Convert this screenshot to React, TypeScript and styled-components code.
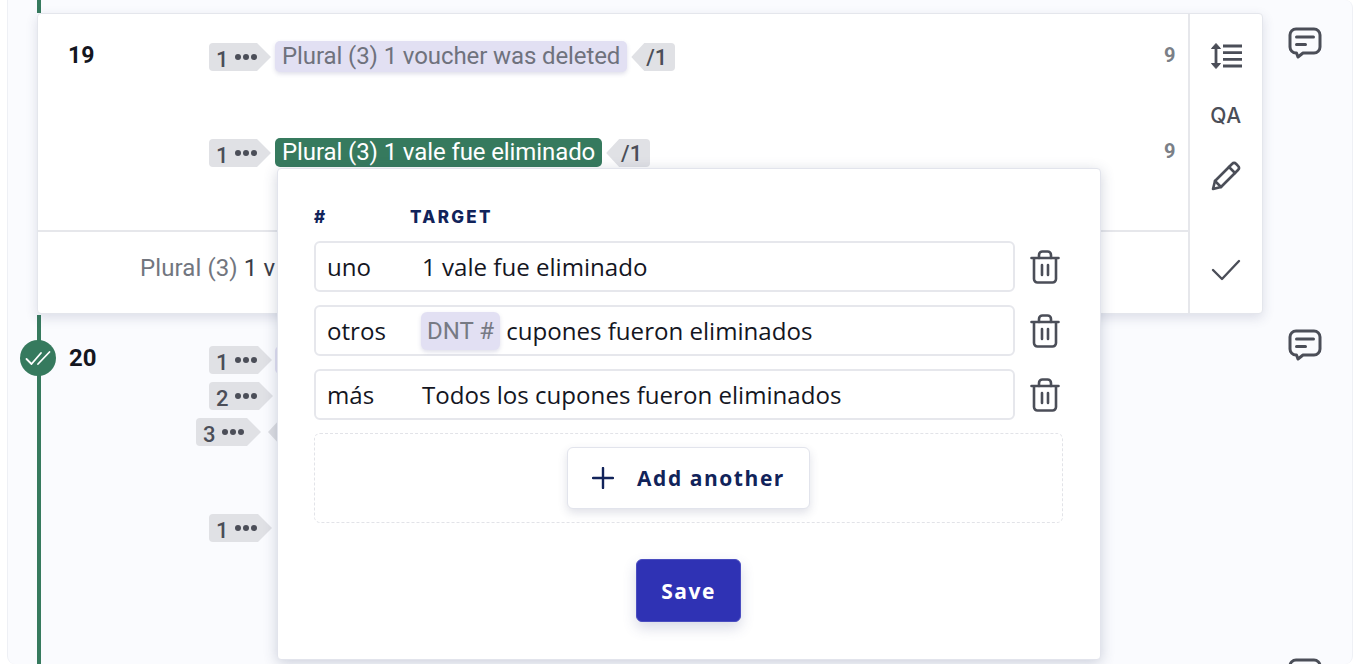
import React from "react";
import styled, { createGlobalStyle } from "styled-components";

const GlobalStyle = createGlobalStyle`
  html, body {
    margin: 0;
    height: 100%;
    overflow: hidden;
    background: #fff;
  }
  * {
    box-sizing: border-box;
  }
`;

const GREEN = "#367a5e";
const INK = "#4b4e58";
const UI_FONT = `"Open Sans", "Noto Sans", sans-serif`;
const SEG_FONT = `Roboto, "Liberation Sans", sans-serif`;

const Panel = styled.div`
  position: relative;
  width: 1346px;
  height: 664px;
  margin-left: 7px;
  overflow: hidden;
  background: #fafbfe;
  border-left: 1px solid #eef0f5;
  border-right: 1px solid #eef0f5;
  border-radius: 0 8px 8px 8px;
  font-family: ${SEG_FONT};
`;

const Stem = styled.div`
  width: 4px;
  height: 13px;
  margin-left: 29px;
  background: ${GREEN};
`;

const ActiveRow = styled.div`
  display: flex;
  align-items: flex-start;
`;

const Card = styled.div`
  display: flex;
  width: 1226px;
  height: 301px;
  margin-left: 29px;
  background: #fff;
  border: 1px solid #e4e6ec;
  border-radius: 4px;
  box-shadow: 0 4px 12px rgba(60, 70, 110, 0.16);
`;

const CardMain = styled.div`
  flex: 1;
  display: flex;
  flex-direction: column;
`;

const CardTop = styled.div`
  height: 218px;
  padding-top: 29px;
  border-bottom: 2px solid #e6e7eb;
`;

const SegRow = styled.div<{ $height: number }>`
  display: grid;
  grid-template-columns: 171px 1fr 40px;
  height: ${(p) => p.$height}px;
`;

const SegNumber = styled.div`
  padding-left: 30px;
  font-size: 23px;
  font-weight: 700;
  line-height: 26px;
  color: #14161f;
`;

const SegContent = styled.div`
  display: flex;
  align-items: flex-start;
  gap: 4px;
`;

const Count = styled.div`
  padding-left: 16px;
  font-size: 20px;
  font-weight: 700;
  line-height: 24px;
  color: #7b7f87;
`;

const OpenTag = styled.div<{ $width?: number }>`
  display: flex;
  align-items: center;
  flex: none;
  gap: 6px;
  width: ${(p) => p.$width ?? 62}px;
  height: 28px;
  padding-left: 7px;
  background: #e0e1e5;
  border-radius: 4px 0 0 4px;
  clip-path: polygon(0 0, calc(100% - 14px) 0, 100% 50%, calc(100% - 14px) 100%, 0 100%);
  font-size: 22px;
  font-weight: 500;
  line-height: 28px;
  color: ${INK};
`;

const TagNumber = styled.span`
  position: relative;
  top: 3px;
`;

const Dots = styled.span`
  display: flex;
  gap: 2px;
  i {
    width: 6px;
    height: 6px;
    border-radius: 50%;
    background: ${INK};
  }
`;

const CloseTag = styled.div`
  display: flex;
  align-items: center;
  justify-content: flex-end;
  flex: none;
  width: 44px;
  height: 28px;
  padding-right: 8px;
  background: #e0e1e5;
  border-radius: 0 4px 4px 0;
  clip-path: polygon(0 50%, 13px 0, 100% 0, 100% 100%, 13px 100%);
  font-size: 22px;
  font-weight: 500;
  color: ${INK};
`;

const Placeholder = styled.div<{ $active?: boolean }>`
  height: ${(p) => (p.$active ? 29 : 31)}px;
  margin-top: ${(p) => (p.$active ? -1 : -2)}px;
  padding: 0 7px;
  border-radius: 5px;
  font-size: 24px;
  letter-spacing: -0.1px;
  line-height: ${(p) => (p.$active ? 29 : 31)}px;
  white-space: nowrap;
  background: ${(p) => (p.$active ? GREEN : "#e2e0f3")};
  color: ${(p) => (p.$active ? "#fff" : "#6f727d")};
  box-shadow: ${(p) => (p.$active ? "none" : "0 2px 4px rgba(80, 80, 140, 0.18)")};
`;

const CardBottom = styled.div`
  flex: 1;
  padding: 21px 0 0 102px;
  font-size: 24px;
  letter-spacing: 0.1px;
  line-height: 30px;
  white-space: nowrap;
  color: #3a3d47;
  span {
    color: #72767f;
  }
`;

const ToolColumn = styled.div`
  display: flex;
  flex-direction: column;
  align-items: center;
  flex: none;
  width: 74px;
  border-left: 2px solid #e6e7eb;
  color: ${INK};
`;

const ToolSlot = styled.div<{ $top: number }>`
  display: flex;
  justify-content: center;
  margin-top: ${(p) => p.$top}px;
  line-height: 0;
`;

const QaLabel = styled.div`
  font-family: Inter, "Liberation Sans", sans-serif;
  font-size: 21px;
  font-weight: 500;
  letter-spacing: 0.5px;
  line-height: 24px;
  color: ${INK};
`;

const CommentSlot = styled.div<{ $top: number }>`
  margin: ${(p) => p.$top}px 0 0 20px;
  color: ${INK};
  line-height: 0;
`;

const NextRow = styled.div`
  display: flex;
  height: 352px;
  margin-left: 29px;
  margin-top: 1px;
  border-left: 4px solid ${GREEN};
`;

const DoneBadge = styled.div`
  position: absolute;
  left: 12px;
  top: 340px;
  display: flex;
  align-items: center;
  justify-content: center;
  width: 36px;
  height: 36px;
  border-radius: 50%;
  background: ${GREEN};
`;

const NextNumber = styled.div`
  width: 168px;
  padding: 29px 0 0 28px;
  font-size: 24px;
  font-weight: 700;
  line-height: 28px;
  color: #14161f;
`;

const TagStack = styled.div`
  display: flex;
  flex-direction: column;
  gap: 8px;
  padding-top: 31px;
`;

const TagLine = styled.div<{ $shift?: number; $gap?: number }>`
  display: flex;
  gap: ${(p) => p.$gap ?? 3}px;
  margin-left: ${(p) => p.$shift ?? 0}px;
`;

const HiddenChip = styled.div`
  width: 30px;
  height: 28px;
  border-radius: 5px;
  background: #e2e0f3;
`;

const HiddenClose = styled.div`
  width: 30px;
  height: 28px;
  background: #dcdde2;
  clip-path: polygon(0 50%, 13px 0, 100% 0, 100% 100%, 13px 100%);
`;

const TagGap = styled.div`
  height: 52px;
`;

const RightGutter = styled.div`
  position: absolute;
  top: 0;
  right: 0;
  display: flex;
  flex-direction: column;
  width: 84px;
`;

const Popover = styled.div`
  position: absolute;
  left: 269px;
  top: 168px;
  display: flex;
  flex-direction: column;
  width: 824px;
  height: 492px;
  padding: 37px 0 0 36px;
  background: #fff;
  border: 1px solid #e2e4ec;
  border-radius: 4px;
  box-shadow: 0 3px 14px rgba(60, 70, 110, 0.24);
  font-family: ${UI_FONT};
`;

const HeaderRow = styled.div`
  display: flex;
  height: 22px;
  margin-bottom: 13px;
  font-family: Inter, sans-serif;
  font-size: 17px;
  font-weight: 800;
  line-height: 22px;
  letter-spacing: 2.3px;
  color: #11235a;
`;

const HashHeader = styled.div`
  width: 96px;
`;

const FormRow = styled.div`
  display: flex;
  align-items: center;
  gap: 15px;
  margin-bottom: 13px;
`;

const Field = styled.div`
  display: flex;
  align-items: center;
  width: 701px;
  height: 51px;
  padding-left: 11px;
  border: 2px solid #e6e7ec;
  border-radius: 6px;
  font-size: 24.1px;
  color: #14161f;
  white-space: nowrap;
`;

const FieldLabel = styled.div`
  width: 95px;
`;

const DntChip = styled.span`
  height: 38px;
  margin: 0 6px 0 -1px;
  padding: 0 6px;
  border-radius: 6px;
  background: #e2e0f3;
  box-shadow: 0 2px 4px rgba(80, 80, 140, 0.18);
  color: #777a84;
  font-family: Roboto, sans-serif;
  font-size: 24px;
  line-height: 39px;
`;

const TrashButton = styled.div`
  color: ${INK};
  line-height: 0;
`;

const AddArea = styled.div`
  display: flex;
  align-items: center;
  justify-content: center;
  width: 749px;
  height: 90px;
  border: 1.5px dashed #e2e3e8;
  border-radius: 6px;
`;

const AddButton = styled.button`
  display: flex;
  align-items: center;
  gap: 23px;
  width: 243px;
  height: 62px;
  padding-left: 24px;
  background: #fff;
  border: 1px solid #e2e4ec;
  border-radius: 6px;
  box-shadow: 0 4px 10px rgba(60, 70, 110, 0.16);
  font-family: ${UI_FONT};
  font-size: 21px;
  font-weight: 700;
  letter-spacing: 1.55px;
  color: #11235a;
`;

const SaveRow = styled.div`
  display: flex;
  justify-content: center;
  width: 749px;
  margin-top: 36px;
`;

const SaveButton = styled.button`
  width: 105px;
  height: 63px;
  background: #2f32b4;
  border: 1px solid #4a4dc0;
  border-radius: 6px;
  box-shadow: 0 6px 14px rgba(60, 70, 130, 0.2);
  font-family: ${UI_FONT};
  font-size: 21px;
  font-weight: 700;
  letter-spacing: 1.5px;
  color: #fff;
`;

const CommentIcon = () => (
  <svg width="34" height="32" viewBox="0 0 34 32" fill="none" stroke="currentColor" strokeWidth="3" strokeLinecap="round" strokeLinejoin="round">
    <path d="M8 2h18a6 6 0 0 1 6 6v12a6 6 0 0 1-6 6H15l-5 4-1.5-4H8a6 6 0 0 1-6-6V8a6 6 0 0 1 6-6z" />
    <path d="M8.5 10h17M8.5 17.500h9" />
  </svg>
);

const LineHeightIcon = () => (
  <svg width="32" height="28" viewBox="0 0 32 28" fill="none" stroke="currentColor" strokeWidth="2.8" strokeLinejoin="round">
    <path d="M6 4v20" />
    <path d="M6 1.500l4.500 5h-9zM6 26.500l4.500-5h-9z" fill="currentColor" strokeWidth="1" />
    <path d="M13 4h19M13 10.700h19M13 17.300h19M13 24h19" />
  </svg>
);

const PencilIcon = () => (
  <svg width="30" height="30" viewBox="0 0 30 30" fill="none" stroke="currentColor" strokeWidth="2.6" strokeLinecap="round" strokeLinejoin="round">
    <path d="M2 28l2-8L21 3a3 3 0 0 1 4.200 0l1.800 1.800a3 3 0 0 1 0 4.200L10 26z" />
    <path d="M18 6l6 6M4 20l6 6" />
  </svg>
);

const CheckIcon = () => (
  <svg width="30" height="22" viewBox="0 0 30 22" fill="none" stroke="currentColor" strokeWidth="2.4" strokeLinecap="round" strokeLinejoin="round">
    <path d="M2 11l9 9L28 2" />
  </svg>
);

const DoubleCheckIcon = () => (
  <svg width="26" height="16" viewBox="0 0 26 16" fill="none" stroke="#fff" strokeWidth="1.8" strokeLinecap="round" strokeLinejoin="round">
    <path d="M1.500 9l5 5L16 3M13 14L24.500 2" />
  </svg>
);

const TrashIcon = () => (
  <svg width="30" height="34" viewBox="0 0 30 34" fill="none" stroke="currentColor" strokeWidth="2.6" strokeLinecap="round" strokeLinejoin="round">
    <path d="M1.500 8h27M4 8v21a3.500 3.500 0 0 0 3.500 3.500h15A3.500 3.500 0 0 0 26 29V8" />
    <path d="M9 8V5a3.500 3.500 0 0 1 3.500-3.500h5A3.500 3.500 0 0 1 21 5v3M12 15v10M18 15v10" />
  </svg>
);

const PlusIcon = () => (
  <svg width="22" height="22" viewBox="0 0 22 22" fill="none" stroke="#11235a" strokeWidth="2.4" strokeLinecap="round">
    <path d="M11 1v20M1 11h20" />
  </svg>
);

const Open = ({ n, width }: { n: number; width?: number }) => (
  <OpenTag $width={width}>
    <TagNumber>{n}</TagNumber>
    <Dots>
      <i />
      <i />
      <i />
    </Dots>
  </OpenTag>
);

const App = () => {
  return (
    <Panel>
      <GlobalStyle />
      <Stem />
      <ActiveRow>
        <Card>
          <CardMain>
            <CardTop>
              <SegRow $height={96}>
                <SegNumber>19</SegNumber>
                <SegContent>
                  <Open n={1} />
                  <Placeholder>Plural (3) 1 voucher was deleted</Placeholder>
                  <CloseTag>/1</CloseTag>
                </SegContent>
                <Count>9</Count>
              </SegRow>
              <SegRow $height={60}>
                <div />
                <SegContent>
                  <Open n={1} />
                  <Placeholder $active>Plural (3) 1 vale fue eliminado</Placeholder>
                  <CloseTag>/1</CloseTag>
                </SegContent>
                <Count>9</Count>
              </SegRow>
            </CardTop>
            <CardBottom>
              <span>Plural (3)</span> 1 v
            </CardBottom>
          </CardMain>
          <ToolColumn>
            <ToolSlot $top={28}>
              <LineHeightIcon />
            </ToolSlot>
            <ToolSlot $top={34}>
              <QaLabel>QA</QaLabel>
            </ToolSlot>
            <ToolSlot $top={33}>
              <PencilIcon />
            </ToolSlot>
            <ToolSlot $top={68}>
              <CheckIcon />
            </ToolSlot>
          </ToolColumn>
        </Card>
      </ActiveRow>
      <RightGutter>
        <CommentSlot $top={27}>
          <CommentIcon />
        </CommentSlot>
        <CommentSlot $top={270}>
          <CommentIcon />
        </CommentSlot>
        <CommentSlot $top={297}>
          <CommentIcon />
        </CommentSlot>
      </RightGutter>
      <NextRow>
        <NextNumber>20</NextNumber>
        <TagStack>
          <TagLine>
            <Open n={1} width={63} />
            <HiddenChip />
          </TagLine>
          <TagLine>
            <Open n={2} width={64} />
          </TagLine>
          <TagLine $shift={-13} $gap={7}>
            <Open n={3} width={65} />
            <HiddenClose />
          </TagLine>
          <TagGap />
          <TagLine>
            <Open n={1} width={63} />
          </TagLine>
        </TagStack>
      </NextRow>
      <DoneBadge>
        <DoubleCheckIcon />
      </DoneBadge>
      <Popover>
        <HeaderRow>
          <HashHeader>#</HashHeader>
          <div>TARGET</div>
        </HeaderRow>
        <FormRow>
          <Field>
            <FieldLabel>uno</FieldLabel>1 vale fue eliminado
          </Field>
          <TrashButton>
            <TrashIcon />
          </TrashButton>
        </FormRow>
        <FormRow>
          <Field>
            <FieldLabel>otros</FieldLabel>
            <DntChip>DNT #</DntChip>cupones fueron eliminados
          </Field>
          <TrashButton>
            <TrashIcon />
          </TrashButton>
        </FormRow>
        <FormRow>
          <Field>
            <FieldLabel>más</FieldLabel>Todos los cupones fueron eliminados
          </Field>
          <TrashButton>
            <TrashIcon />
          </TrashButton>
        </FormRow>
        <AddArea>
          <AddButton>
            <PlusIcon />
            Add another
          </AddButton>
        </AddArea>
        <SaveRow>
          <SaveButton>Save</SaveButton>
        </SaveRow>
      </Popover>
    </Panel>
  );
};

export default App;
